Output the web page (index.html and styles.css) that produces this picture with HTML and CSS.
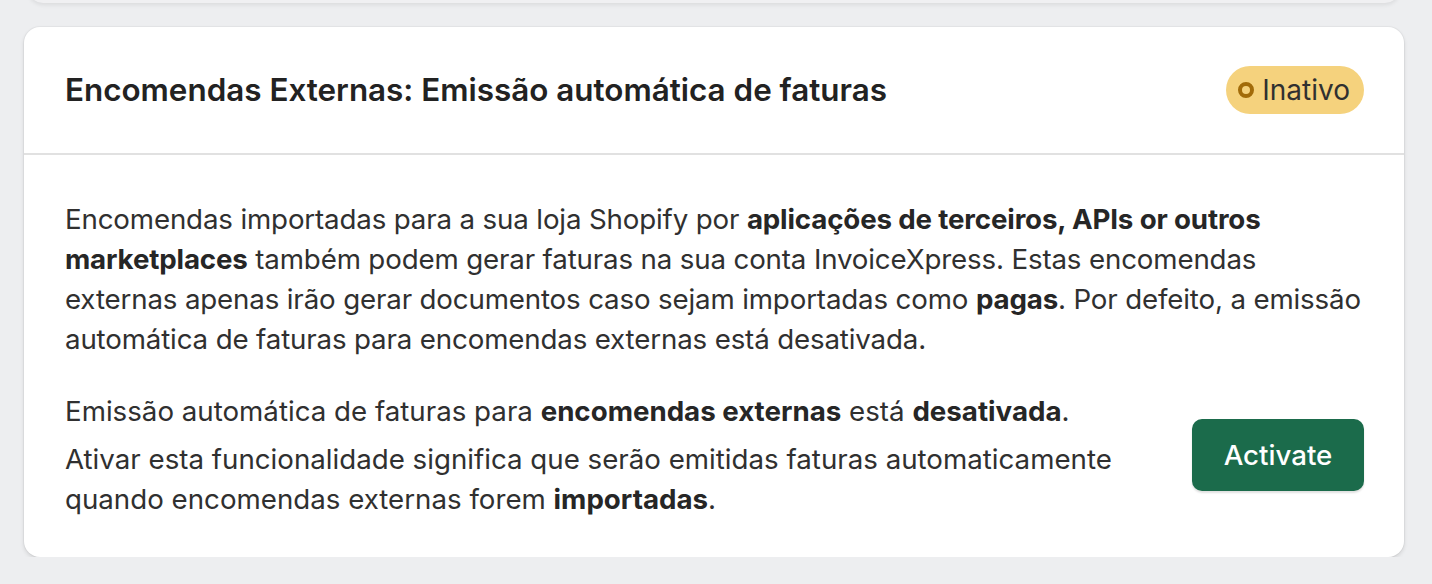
FILE: index.html
```html
<!DOCTYPE html>
<html lang="pt">
<head>
<meta charset="utf-8">
<link rel="stylesheet" href="styles.css">
</head>
<body>
<div class="prev-card"></div>
<div class="card">
  <div class="card-header">
    <h2 class="title">Encomendas Externas: Emissão automática de faturas</h2>
    <span class="badge"><span class="badge-dot"></span>Inativo</span>
  </div>
  <div class="card-body">
    <p class="desc">Encomendas importadas para a sua loja Shopify por <b>aplicações de terceiros, APIs or outros marketplaces</b> também podem gerar faturas na sua conta InvoiceXpress. Estas encomendas externas apenas irão gerar documentos caso sejam importadas como <b>pagas</b>. Por defeito, a emissão automática de faturas para encomendas externas está desativada.</p>
    <div class="status-row">
      <div class="status-text">
        <p class="status-line">Emissão automática de faturas para <b>encomendas externas</b> está <b>desativada</b>.</p>
        <p class="status-help">Ativar esta funcionalidade significa que serão emitidas faturas automaticamente quando encomendas externas forem <b>importadas</b>.</p>
      </div>
      <button class="btn-primary">Activate</button>
    </div>
  </div>
</div>
</body>
</html>
```

FILE: styles.css
```css
* { box-sizing: border-box; }
html, body { margin: 0; padding: 0; }
body {
  background: #edeef0;
  font-family: Inter, "Noto Sans", sans-serif;
  color: #303030;
  padding: 0 28px 0 24px;
}
.prev-card {
  height: 15px;
  margin: -12px 4px 0;
  padding-top: 12px;
  background: #f0f0f2;
  border-radius: 0 0 16px 16px;
  box-shadow: 0 2px 4px rgba(0,0,0,0.08);
}
.card {
  margin-top: 24px;
  background: #fff;
  border-radius: 16px;
  box-shadow: 0 0 0 1px rgba(0,0,0,0.03), 0 2px 4px rgba(0,0,0,0.12);
  overflow: hidden;
}
.card-header {
  height: 128px;
  padding: 0 40px 0 41px;
  display: flex;
  align-items: center;
  justify-content: space-between;
  border-bottom: 2px solid #e1e1e1;
}
.title {
  margin: 0;
  font-size: 31.4px;
  font-weight: 600;
  line-height: 40px;
  color: #222;
}
.badge {
  display: inline-flex;
  align-items: center;
  height: 48px;
  padding: 0 14px 0 12px;
  border-radius: 24px;
  background: #f5d27d;
  color: #303030;
  font-size: 28px;
  line-height: 40px;
}
.badge-dot {
  width: 16px;
  height: 16px;
  border: 4px solid #a26b09;
  border-radius: 50%;
  margin-right: 8px;
}
.card-body {
  padding: 44px 40px 38px 41px;
}
.desc {
  margin: 0 -4px 0 0;
  font-size: 27.7px;
  line-height: 40px;
  letter-spacing: -0.15px;
}
b { font-weight: 650; color: #262626; }
.status-row {
  margin-top: 32px;
  display: flex;
  align-items: center;
  gap: 40px;
}
.status-text { flex: 1; }
.status-line {
  margin: 0 0 8px;
  font-size: 27.7px;
  line-height: 40px;
}
.status-help {
  margin: 0;
  font-size: 27.7px;
  line-height: 40px;
}
.btn-primary {
  flex: none;
  width: 172px;
  height: 72px;
  border: none;
  border-radius: 10px;
  background: #1b6b4b;
  color: #fff;
  font-family: inherit;
  font-size: 27.7px;
  font-weight: 500;
  box-shadow: 0 2px 2px rgba(0,0,0,0.12);
}
```
